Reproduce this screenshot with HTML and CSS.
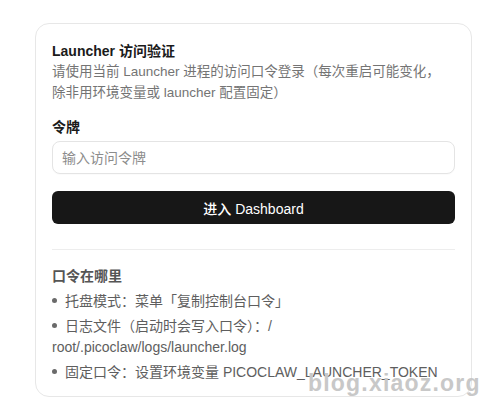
FILE: index.html
```html
<!DOCTYPE html>
<html lang="zh-CN">
<head>
<meta charset="utf-8">
<title>Launcher 访问验证</title>
<link rel="stylesheet" href="styles.css">
</head>
<body>
  <div class="card">
    <h1 class="title">Launcher 访问验证</h1>
    <p class="desc">请使用当前 Launcher 进程的访问口令登录（每次重启可能变化，<br>除非用环境变量或 launcher 配置固定）</p>
    <label class="label" for="token">令牌</label>
    <input class="input" id="token" type="password" placeholder="输入访问令牌">
    <button class="btn" type="button">进入 Dashboard</button>
    <div class="help">
      <h2 class="help-title">口令在哪里</h2>
      <ul class="help-list">
        <li>托盘模式：菜单「复制控制台口令」</li>
        <li>日志文件（启动时会写入口令）：/<wbr>root/.picoclaw/logs/launcher.log</li>
        <li>固定口令：设置环境变量 PICOCLAW_LAUNCHER_TOKEN</li>
      </ul>
    </div>
  </div>
  <div class="watermark">blog.xiaoz.org</div>
</body>
</html>
```

FILE: styles.css
```css
* {
  box-sizing: border-box;
}

html, body {
  margin: 0;
  background: #ffffff;
}

body {
  position: relative;
  width: 500px;
  height: 419px;
  padding: 23px 0 0 35px;
  font-family: "Liberation Sans", "Noto Sans CJK SC", sans-serif;
  color: #1c1c1c;
  overflow: hidden;
}

.card {
  width: 437px;
  border: 1px solid #e7e7e7;
  border-radius: 14px;
  padding: 17px 16px 13px 16px;
  display: flex;
  flex-direction: column;
  background: #ffffff;
}

.title {
  margin: 0;
  font-size: 14px;
  line-height: 20px;
  font-weight: 600;
  color: #1a1a1a;
}

.desc {
  margin: 0;
  font-size: 13.5px;
  line-height: 21px;
  color: #747474;
}

.label {
  margin-top: 14px;
  font-size: 14px;
  line-height: 20px;
  font-weight: 600;
  color: #1a1a1a;
}

.input {
  margin-top: 4px;
  height: 33px;
  width: 100%;
  border: 1px solid #e4e4e4;
  border-radius: 8px;
  padding: 0 9px;
  font-family: inherit;
  font-size: 14px;
  color: #1a1a1a;
  background: #ffffff;
  outline: none;
  box-shadow: 0 1px 1px rgba(0, 0, 0, 0.02);
}

.input::placeholder {
  color: #8c8c8c;
}

.btn {
  margin-top: 17px;
  height: 33px;
  width: 100%;
  border: none;
  border-radius: 6px;
  background: #171717;
  color: #ffffff;
  font-family: inherit;
  font-size: 14px;
  font-weight: 500;
  cursor: pointer;
}

.help {
  margin-top: 25px;
  border-top: 1px solid #ededed;
  padding-top: 16px;
}

.help-title {
  margin: 0;
  font-size: 14px;
  line-height: 20px;
  font-weight: 600;
  color: #555555;
}

.help-list {
  margin: 5px 0 0 0;
  padding: 0;
  list-style: none;
  display: flex;
  flex-direction: column;
  gap: 4px;
}

.help-list li {
  font-size: 14px;
  line-height: 21px;
  color: #5e5e5e;
}

.help-list li::before {
  content: "";
  display: inline-block;
  width: 5px;
  height: 5px;
  border-radius: 50%;
  background: #6a6a6a;
  margin: 0 8px 0 0;
  vertical-align: middle;
  position: relative;
  top: -2px;
}

.watermark {
  position: absolute;
  left: 308px;
  top: 372px;
  font-family: "Liberation Sans", sans-serif;
  font-weight: 700;
  font-size: 23px;
  line-height: 23px;
  letter-spacing: 1.2px;
  color: #c8c8c8;
  white-space: nowrap;
}
```
